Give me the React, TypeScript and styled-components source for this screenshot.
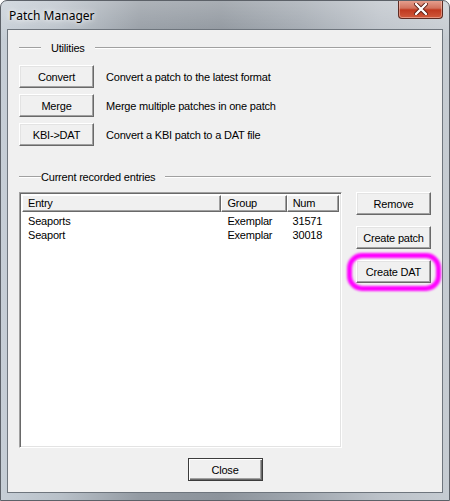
import React from "react";
import styled, { createGlobalStyle } from "styled-components";

const GlobalStyle = createGlobalStyle`
  html, body {
    margin: 0;
    padding: 0;
    background: #ffffff;
  }
  body {
    font-family: "Liberation Sans", Arial, sans-serif;
  }
`;

const utilities = [
  { label: "Convert", text: "Convert a patch to the latest format" },
  { label: "Merge", text: "Merge multiple patches in one patch" },
  { label: "KBI->DAT", text: "Convert a KBI patch to a DAT file" },
];

const entries = [
  { entry: "Seaports", group: "Exemplar", num: "31571" },
  { entry: "Seaport", group: "Exemplar", num: "30018" },
];

const App: React.FC = () => {
  return (
    <>
      <GlobalStyle />
      <Window>
        <TitleBar>
          <Title>Patch Manager</Title>
          <CloseBox>
            <svg width="14" height="12" viewBox="0 0 14 12">
              <path
                d="M2 1 L12 11 M12 1 L2 11"
                stroke="#5a1a10"
                strokeWidth="4"
                strokeLinecap="round"
              />
              <path
                d="M2 1 L12 11 M12 1 L2 11"
                stroke="#ffffff"
                strokeWidth="2.4"
                strokeLinecap="round"
              />
            </svg>
          </CloseBox>
        </TitleBar>

        <Client>
          <GroupHeader>
            <GroupLine $w={22} />
            <GroupLabel $pad={10}>Utilities</GroupLabel>
            <GroupLine />
          </GroupHeader>

          <ToolList>
            {utilities.map((u) => (
              <ToolRow key={u.label}>
                <Button>{u.label}</Button>
                <ToolText>{u.text}</ToolText>
              </ToolRow>
            ))}
          </ToolList>

          <GroupHeader $top={24}>
            <GroupLine $w={22} />
            <GroupLabel $pad={0}>Current recorded entries</GroupLabel>
            <GroupLine $gap={10} />
          </GroupHeader>

          <EntriesArea>
            <ListView>
              <HeaderRow>
                <HeaderCell $w={202}>Entry</HeaderCell>
                <HeaderCell $w={66}>Group</HeaderCell>
                <HeaderCell $w={53}>Num</HeaderCell>
                <HeaderFill />
              </HeaderRow>
              <Rows>
                {entries.map((e) => (
                  <Row key={e.num}>
                    <Cell $w={202}>{e.entry}</Cell>
                    <Cell $w={66}>{e.group}</Cell>
                    <Cell $w={53}>{e.num}</Cell>
                  </Row>
                ))}
              </Rows>
            </ListView>

            <SideButtons>
              <Button>Remove</Button>
              <Button>Create patch</Button>
              <Highlighted>
                <Button>Create DAT</Button>
              </Highlighted>
            </SideButtons>
          </EntriesArea>

          <Footer>
            <DefaultButton>Close</DefaultButton>
          </Footer>
        </Client>
      </Window>
    </>
  );
};

const Window = styled.div`
  width: 450px;
  height: 501px;
  box-sizing: border-box;
  display: flex;
  flex-direction: column;
  border: 1px solid #5c6168;
  border-radius: 7px 7px 0 0;
  background: linear-gradient(
      180deg,
      rgba(255, 255, 255, 0.25) 0px,
      rgba(255, 255, 255, 0) 40px
    ),
    linear-gradient(
      90deg,
      #c6ced6 0px,
      #b8c0c8 60px,
      #939aa2 140px,
      #8c939b 220px,
      #a0a7af 300px,
      #bcc2c9 380px,
      #c6ccd2 450px
    );
  padding: 0 6px 7px 6px;
  overflow: hidden;
`;

const TitleBar = styled.div`
  height: 28px;
  display: flex;
  align-items: flex-start;
  justify-content: space-between;
`;

const Title = styled.div`
  font-family: "Noto Sans", "Liberation Sans", sans-serif;
  font-size: 12px;
  color: #000000;
  margin-top: 6px;
  margin-left: 2px;
  text-shadow: 0 0 8px rgba(255, 255, 255, 0.9), 0 0 4px rgba(255, 255, 255, 0.9);
`;

const CloseBox = styled.div`
  width: 45px;
  height: 19px;
  margin-top: -1px;
  box-sizing: border-box;
  border: 1px solid #5e2b22;
  border-top: none;
  border-radius: 0 0 4px 4px;
  background: linear-gradient(180deg, #e8a493 0%, #d2735e 45%, #c0391f 55%, #d05a3c 100%);
  box-shadow: inset 0 0 0 1px rgba(255, 220, 210, 0.45);
  display: flex;
  align-items: center;
  justify-content: center;
`;

const Client = styled.div`
  flex: 1;
  background: #f0f0f0;
  border: 1px solid #6e757d;
  display: flex;
  flex-direction: column;
  padding: 0 11px;
  font-size: 11px;
  letter-spacing: -0.2px;
  color: #000000;
`;

const GroupHeader = styled.div<{ $top?: number }>`
  display: flex;
  align-items: center;
  height: 13px;
  margin-top: ${(p) => p.$top ?? 11}px;
`;

const GroupLine = styled.div<{ $w?: number; $gap?: number }>`
  height: 1px;
  background: #a0a0a0;
  border-bottom: 1px solid #ffffff;
  ${(p) => (p.$w ? `width: ${p.$w}px;` : "flex: 1;")}
  margin-left: ${(p) => p.$gap ?? 0}px;
`;

const GroupLabel = styled.span<{ $pad: number }>`
  padding: 0 ${(p) => p.$pad}px;
  white-space: nowrap;
`;

const ToolList = styled.div`
  display: flex;
  flex-direction: column;
  gap: 6px;
  margin-top: 11px;
`;

const ToolRow = styled.div`
  display: flex;
  align-items: center;
  gap: 12px;
`;

const Button = styled.button`
  width: 75px;
  height: 23px;
  box-sizing: border-box;
  padding: 0;
  font-family: "Liberation Sans", Arial, sans-serif;
  font-size: 11px;
  letter-spacing: -0.2px;
  color: #000000;
  background: #f0f0f0;
  border: 1px solid;
  border-color: #ffffff #696969 #696969 #ffffff;
  box-shadow: inset -1px -1px 0 #a0a0a0, inset 1px 1px 0 #e3e3e3;
  cursor: default;
`;

const DefaultButton = styled(Button)`
  border: 1px solid #3c3c3c;
  box-shadow: inset 1px 1px 0 #ffffff, inset -1px -1px 0 #696969,
    inset -2px -2px 0 #a0a0a0;
`;

const ToolText = styled.span`
  white-space: nowrap;
`;

const EntriesArea = styled.div`
  display: flex;
  align-items: flex-start;
  margin-top: 9px;
  gap: 14px;
`;

const ListView = styled.div`
  width: 323px;
  height: 256px;
  box-sizing: border-box;
  background: #ffffff;
  border: 1px solid;
  border-color: #a0a0a0 #ffffff #ffffff #a0a0a0;
  box-shadow: inset 1px 1px 0 #696969, inset -1px -1px 0 #e3e3e3;
  padding: 2px;
  display: flex;
  flex-direction: column;
`;

const HeaderRow = styled.div`
  display: flex;
  height: 17px;
`;

const HeaderCell = styled.div<{ $w: number }>`
  width: ${(p) => p.$w}px;
  box-sizing: border-box;
  background: #f0f0f0;
  border: 1px solid;
  border-color: #ffffff #696969 #696969 #ffffff;
  box-shadow: inset -1px -1px 0 #a0a0a0;
  padding: 1px 0 0 5px;
  line-height: 13px;
  white-space: nowrap;
`;

const HeaderFill = styled.div`
  flex: 1;
  background: #f0f0f0;
`;

const Rows = styled.div`
  display: flex;
  flex-direction: column;
  padding-top: 2px;
`;

const Row = styled.div`
  display: flex;
  height: 14px;
  line-height: 14px;
`;

const Cell = styled.div<{ $w: number }>`
  width: ${(p) => p.$w}px;
  padding-left: 6px;
  box-sizing: border-box;
  white-space: nowrap;
`;

const SideButtons = styled.div`
  display: flex;
  flex-direction: column;
  gap: 11px;
`;

const Highlighted = styled.div`
  position: relative;
  display: flex;

  &::after {
    content: "";
    position: absolute;
    left: -9px;
    top: -7px;
    right: -10px;
    bottom: -8px;
    border: 5px solid #ff00ff;
    border-radius: 15px;
    filter: blur(0.8px);
    pointer-events: none;
  }
`;

const Footer = styled.div`
  display: flex;
  justify-content: center;
  margin-top: 10px;
`;

export default App;
